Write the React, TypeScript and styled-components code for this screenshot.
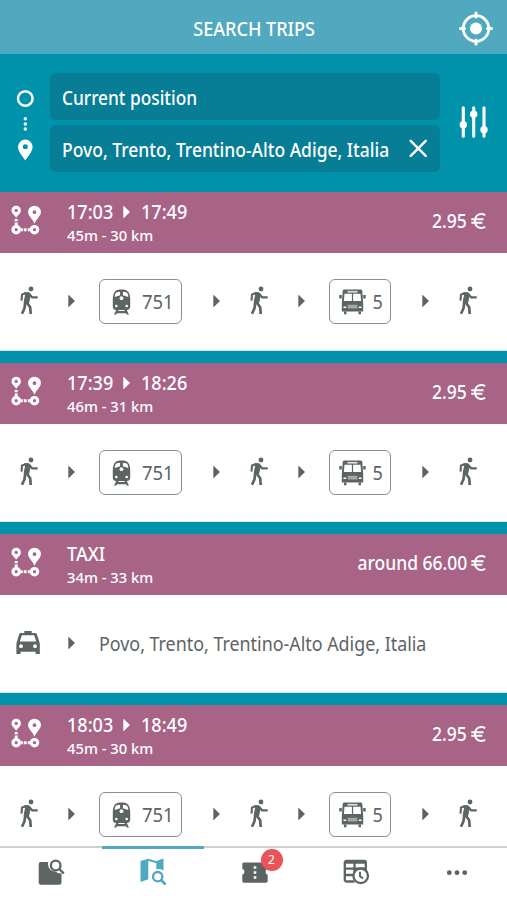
import React from "react";
import styled, { createGlobalStyle } from "styled-components";

const GlobalStyle = createGlobalStyle`
  * { box-sizing: border-box; }
  body { margin: 0; background: #0091ab; font-family: "Noto Sans", sans-serif; }
  svg { display: block; flex: none; }
`;

const Screen = styled.div`
  width: 507px;
  height: 900px;
  overflow: hidden;
  display: flex;
  flex-direction: column;
  background: #0091ab;
`;

const Text = styled.span<{ $size: number; $scale: number; $origin?: string; $weight?: number }>`
  display: block;
  flex: none;
  white-space: nowrap;
  font-size: ${(p) => p.$size}px;
  font-weight: ${(p) => p.$weight ?? 400};
  line-height: 24px;
  transform: scaleX(${(p) => p.$scale});
  transform-origin: ${(p) => p.$origin ?? "left"} center;
`;

const TopBar = styled.header`
  flex: none;
  height: 54px;
  padding: 3px 13px 0 0;
  display: grid;
  grid-template-columns: 50px 1fr 36px;
  align-items: center;
  justify-items: center;
  background: #50a9be;
  color: #fff;
`;

const SearchPanel = styled.section`
  flex: none;
  height: 138px;
  padding: 19px 18px 20px 16px;
  display: flex;
  color: #fff;
`;

const Rail = styled.div`
  width: 34px;
  padding-top: 16px;
`;

const Fields = styled.div`
  width: 390px;
  display: flex;
  flex-direction: column;
  gap: 5px;
`;

const Field = styled.div<{ $height: number }>`
  height: ${(p) => p.$height}px;
  padding: 0 13px 0 12px;
  display: flex;
  align-items: center;
  justify-content: space-between;
  border-radius: 6px;
  background: #087d96;
`;

const FieldLabel = styled.div`
  width: 330px;
  margin-top: 3px;
`;

const FilterButton = styled.div`
  margin: 32px 0 0 18px;
`;

const Trips = styled.main`
  flex: none;
  height: 654px;
  overflow: hidden;
`;

const Card = styled.article`
  margin-bottom: 12px;
`;

const CardHeader = styled.div`
  height: 60.5px;
  padding: 8px 21px 0 11px;
  display: flex;
  background: #a86487;
  color: #fff;
`;

const Summary = styled.div`
  width: 160px;
  margin-left: 26px;
`;

const Times = styled.div`
  height: 23px;
  display: flex;
  align-items: center;
`;

const TimeSlot = styled.div`
  width: 56px;
`;

const TimeArrow = styled.div`
  width: 18px;
`;

const Price = styled.div`
  flex: 1;
  height: 24px;
  margin-top: 9px;
  display: flex;
  align-items: center;
  justify-content: flex-end;
  gap: 4px;
`;

const CardBody = styled.div<{ $taxi?: boolean }>`
  height: 98.5px;
  padding: 0 16px 0 ${(p) => (p.$taxi ? 16 : 19)}px;
  display: flex;
  align-items: center;
  gap: ${(p) => (p.$taxi ? 28 : 29)}px;
  background: #fff;
  border-bottom: 1px solid #d9e6e8;
  color: #5d6464;
`;

const Chip = styled.div<{ $width: number }>`
  flex: none;
  width: ${(p) => p.$width}px;
  height: 45px;
  margin: 1px 1.5px 0 -5px;
  padding: 0 7px 0 9px;
  display: flex;
  align-items: center;
  justify-content: space-between;
  border: 1px solid #8b8f90;
  border-radius: 6px;
`;

const Destination = styled.div`
  margin: 2px 0 0 -4px;
`;

const TabBar = styled.nav`
  flex: none;
  height: 54px;
  display: grid;
  grid-template-columns: 102px 102px 101px 101px 101px;
  background: #fff;
`;

const Tab = styled.div<{ $active?: boolean }>`
  display: flex;
  justify-content: center;
  padding-top: ${(p) => (p.$active ? 9 : 11)}px;
  border-top: ${(p) => (p.$active ? "3px solid #50a9be" : "2px solid #d0d0d0")};
  color: ${(p) => (p.$active ? "#50a9be" : "#5d6464")};
`;

const TicketHolder = styled.div`
  position: relative;
  height: 30px;
`;

const Badge = styled.span`
  position: absolute;
  left: 20px;
  top: -10px;
  width: 22px;
  height: 22px;
  border-radius: 50%;
  background: #eb5358;
  color: #fff;
  font-size: 12px;
  line-height: 22px;
  text-align: center;
`;

const LocateIcon = () => (
  <svg width="36" height="36" viewBox="0 0 36 36" fill="none" stroke="#fff">
    <circle cx="18" cy="17.500" r="12.800" strokeWidth="2.800" />
    <circle cx="18" cy="17.500" r="6" fill="#fff" stroke="none" />
    <path d="M18 2v4M18 29v4M2.500 17.500h4M29.500 17.500h4" strokeWidth="3" strokeLinecap="round" />
  </svg>
);

const RailIcon = () => (
  <svg width="19" height="72" viewBox="0 0 19 72" fill="#fff">
    <circle cx="9.300" cy="9.500" r="7.300" fill="none" stroke="#fff" strokeWidth="2.500" />
    <circle cx="9.300" cy="29.800" r="1.700" />
    <circle cx="9.300" cy="35" r="1.700" />
    <circle cx="9.300" cy="40" r="1.700" />
    <path fillRule="evenodd" d="M9.300 50.500a7.300 7.300 0 0 0-7.300 7.300c0 4.400 3.800 8.700 7.300 13.700 3.500-5 7.300-9.300 7.300-13.700A7.300 7.300 0 0 0 9.300 50.500zm0 4.800a2.500 2.500 0 1 1 0 5 2.500 2.500 0 0 1 0-5z" />
  </svg>
);

const ClearIcon = () => (
  <svg width="18" height="18" viewBox="0 0 18 18" fill="none" stroke="#fff" strokeWidth="2.400" strokeLinecap="round">
    <path d="M1.700 1.800l15 15M16.700 1.800l-15 15" />
  </svg>
);

const FilterIcon = () => (
  <svg width="30" height="34" viewBox="0 0 30 34" fill="#fff" stroke="#fff">
    <path d="M5.300 2.700v28.500M15.700 2.700v28.500M26 2.700v28.500" strokeWidth="3.100" strokeLinecap="round" />
    <g stroke="none">
      <circle cx="5.300" cy="19.700" r="3.700" />
      <circle cx="15.700" cy="9.200" r="3.700" />
      <circle cx="26" cy="24.700" r="3.700" />
    </g>
  </svg>
);

const RouteIcon = () => (
  <svg width="30" height="36" viewBox="0 0 30 36" fill="#fff">
    <path fillRule="evenodd" d="M5.200 5.700a4.700 4.700 0 0 0-4.700 4.700c0 3 2.900 4.200 4.700 7.300 1.800-3.100 4.700-4.300 4.700-7.300a4.700 4.700 0 0 0-4.700-4.700zm0 3a1.700 1.700 0 1 1 0 3.400 1.700 1.700 0 0 1 0-3.400z" />
    <path fillRule="evenodd" d="M23.500 5.700a6.400 6.400 0 0 0-6.400 6.400c0 4.200 4 6.200 6.400 11.600 2.400-5.400 6.400-7.400 6.400-11.600a6.400 6.400 0 0 0-6.400-6.400zm0 4.600a1.900 1.900 0 1 1 0 3.800 1.900 1.900 0 0 1 0-3.800z" />
    <circle cx="5.200" cy="29.700" r="3.200" fill="none" stroke="#fff" strokeWidth="3.200" />
    <circle cx="23.500" cy="29.700" r="3.200" fill="none" stroke="#fff" strokeWidth="3.200" />
    <path d="M3.700 19h3v2.200h-3zM3.700 22.500h3v3h-3zM10 28.200h1.800v3H10zM12.800 28.200h2.800v3h-2.800zM16.800 28.200h2v3h-2z" />
  </svg>
);

const Arrow = () => (
  <svg width="7" height="12" viewBox="0 0 7 12" fill="currentColor">
    <path d="M.3 0h.5L7 6 .8 12H.3z" />
  </svg>
);

const EuroIcon = () => (
  <svg width="15" height="16" viewBox="0 0 15 16" fill="none" stroke="#fff" strokeWidth="1.900">
    <path d="M14.200 2.300C12.500 1 10.500.8 8.700 1.200 5.700 2 4 4.600 4 8s1.700 6 4.700 6.800c1.800.4 3.800.2 5.500-1.100M.3 6.300h12.200M.3 9.700h11" />
  </svg>
);

const WalkIcon = () => (
  <svg width="20" height="32" viewBox="0 0 20 32" fill="none" stroke="#5d6464" strokeLinejoin="round">
    <circle cx="12" cy="4" r="2.400" fill="#5d6464" stroke="none" />
    <path d="M5.500 7.700h4.600l1.100 2.500-1.700 8.300-4.400-.8 1.500-8z" fill="#5d6464" strokeWidth="1" />
    <path d="M7.200 8.200L3 9.500 2.500 15.700" strokeWidth="2.100" />
    <path d="M10 8.800l3 3.500h5.700" strokeWidth="2.300" />
    <path d="M7.700 17.500l3.500 4.800.5 6.700" strokeWidth="2.700" />
    <path d="M6.300 17l-.8 6.200-2.500 5.500" strokeWidth="2.700" />
  </svg>
);

const TrainIcon = () => (
  <svg width="26" height="28" viewBox="0 0 26 28" fill="#5d6464">
    <path d="M12.500 1.500c3 0 5.500.6 6.700 2.300 1.300 1.800 2 4.500 2 7.200v7.800c0 2-1.300 3.200-3.200 3.200H7c-1.900 0-3.200-1.200-3.200-3.200V11c0-2.700.7-5.400 2-7.200 1.200-1.700 3.700-2.300 6.700-2.300z" />
    <g fill="#fff">
      <path d="M6.600 5.300c.4-1 1.500-1.500 4.500-1.600v3.600L5.700 9c0-1.500.3-2.700.9-3.700zM18.400 5.300c-.4-1-1.500-1.500-4.500-1.600v3.600L19.300 9c0-1.500-.3-2.700-.9-3.700z" />
      <circle cx="12.500" cy="10.200" r="1.900" />
      <circle cx="7.300" cy="18" r="1.300" />
      <circle cx="17.700" cy="18" r="1.300" />
    </g>
    <path d="M7.500 21.500h2.200l-.5 1.500h6.600l-.5-1.500h2.200L20 26.500h-2.300l-.6-1.200H7.900l-.6 1.200H5z" />
  </svg>
);

const BusIcon = () => (
  <svg width="28" height="28" viewBox="0 0 28 28" fill="#5d6464">
    <path d="M5.500 1.500h16c1 0 1.700.6 1.800 1.600l.9 12.500v7.900H2.800v-7.900l.9-12.500c.1-1 .8-1.600 1.800-1.600z" />
    <path d="M5.500 5.800h7.400v7.200H4.900zM14.100 5.800h7.400l.6 7.200h-8zM4.500 18.500h2.700v1.600H4.500zM19.800 18.500h2.700v1.600h-2.700z" fill="#fff" />
    <path d="M8.500 2.900h10v1.700h-10z" fill="#dfe1e1" />
    <path d="M8.700 16.800h9.600v3.700H8.700z" fill="#a4a8a8" />
    <path d="M.3 7h2.500v3.500H.3zM24.200 7h2.500v3.500h-2.500zM5 23.500h2.500v2.800H5zM19.500 23.500H22v2.800h-2.500z" />
  </svg>
);

const TaxiIcon = () => (
  <svg width="24" height="26" viewBox="0 0 24 26" fill="#5d6464">
    <path d="M8.300 1h7.400v2h3c1.300 0 2 .6 2.300 1.500l2.800 9V24h-4.200v-2.200H4.600V24H.4V13.500L3 4.500C3.300 3.600 4 3 5.300 3h3z" />
    <path d="M5.800 5.300h12.400l2 6.200H3.800z" fill="#fff" />
    <circle cx="5" cy="16.200" r="1.900" fill="#fff" />
    <circle cx="19" cy="16.200" r="1.900" fill="#fff" />
  </svg>
);

const PlaceSearchIcon = () => (
  <svg width="28" height="28" viewBox="0 0 28 28" fill="currentColor">
    <path d="M4 3h7.200c-1 5.500 2.500 9.700 7.500 9.500l2.300 1.700h3.500v9c0 1.700-.8 2.500-2.500 2.500h-18c-1.500 0-2.300-.8-2.300-2.500V5.500C1.700 3.800 2.500 3 4 3z" />
    <g fill="none" stroke="currentColor" strokeWidth="2.300">
      <circle cx="18.700" cy="6.500" r="4.800" />
      <path d="M22.200 10l4 3.800" strokeLinecap="round" />
    </g>
  </svg>
);

const MapSearchIcon = () => (
  <svg width="28" height="28" viewBox="0 0 28 28" fill="currentColor">
    <path d="M1.500 3l7.800-2.200v20.400l-7.800 2.800zM17.300 3.500L24.500.8v11.900c-2-1.500-4.800-2-7.200-1.200z" />
    <g fill="none" stroke="currentColor" strokeWidth="2">
      <path d="M9 1.800l8.500 2.500L24 1.800" />
      <circle cx="18.700" cy="18.700" r="4.700" strokeWidth="2.300" />
      <path d="M22.300 22.300l3.500 3.500" strokeLinecap="round" strokeWidth="2.700" />
    </g>
  </svg>
);

const TicketIcon = () => (
  <svg width="28" height="26" viewBox="0 0 28 26" fill="currentColor">
    <path d="M3 3.500h22c1 0 1.700.8 1.700 1.800v4.500c-2.700.5-2.700 5.500 0 6V22c0 1-.7 1.700-1.700 1.700H3c-1 0-1.700-.7-1.700-1.700v-6.200c2.700-.5 2.700-5.500 0-6V5.300c0-1 .7-1.800 1.700-1.800z" />
    <path d="M12.700 7.300h2.600v2.500h-2.600zM12.700 12.300h2.600v2.500h-2.600zM12.700 17.300h2.600v2.500h-2.600z" fill="#fff" />
  </svg>
);

const TimetableIcon = () => (
  <svg width="28" height="28" viewBox="0 0 28 28" fill="none" stroke="currentColor" strokeWidth="2.300">
    <path d="M12.500 22.500H4.300c-.8 0-1.500-.7-1.500-1.500V3.500c0-.8.700-1.500 1.500-1.500h18c.8 0 1.500.7 1.500 1.500v8M3 3.500h20.500M3 9.700h20.500M3 16h9M12.500 3v13" />
    <circle cx="18.700" cy="16.800" r="7.300" fill="#fff" strokeWidth="2.300" />
    <path d="M18 12.700v4.500l3 2.200" strokeWidth="2" />
  </svg>
);

const MoreIcon = () => (
  <svg width="28" height="28" viewBox="0 0 28 28" fill="currentColor">
    <circle cx="6.300" cy="13.700" r="2.400" />
    <circle cx="14" cy="13.700" r="2.400" />
    <circle cx="21.700" cy="13.700" r="2.400" />
  </svg>
);

const Amount = ({ children }: { children: string }) => (
  <Price>
    <Text $size={19} $scale={0.92} $origin="right" $weight={500}>{children}</Text>
    <EuroIcon />
  </Price>
);

const TransitTrip = ({ from, to, info }: { from: string; to: string; info: string }) => (
  <Card>
    <CardHeader>
      <RouteIcon />
      <Summary>
        <Times>
          <TimeSlot><Text $size={19} $scale={0.95} $weight={500}>{from}</Text></TimeSlot>
          <TimeArrow><Arrow /></TimeArrow>
          <Text $size={19} $scale={0.95} $weight={500}>{to}</Text>
        </Times>
        <Text $size={15} $scale={0.985} $weight={500}>{info}</Text>
      </Summary>
      <Amount>2.95</Amount>
    </CardHeader>
    <CardBody>
      <WalkIcon />
      <Arrow />
      <Chip $width={83}>
        <TrainIcon />
        <Text $size={19} $scale={0.97} $origin="right">751</Text>
      </Chip>
      <Arrow />
      <WalkIcon />
      <Arrow />
      <Chip $width={62.5}>
        <BusIcon />
        <Text $size={19} $scale={0.95} $origin="right">5</Text>
      </Chip>
      <Arrow />
      <WalkIcon />
    </CardBody>
  </Card>
);

const TaxiTrip = () => (
  <Card>
    <CardHeader>
      <RouteIcon />
      <Summary>
        <Times><Text $size={19} $scale={0.95} $weight={500}>TAXI</Text></Times>
        <Text $size={15} $scale={0.985} $weight={500}>34m - 33 km</Text>
      </Summary>
      <Amount>around 66.00</Amount>
    </CardHeader>
    <CardBody $taxi>
      <TaxiIcon />
      <Arrow />
      <Destination><Text $size={19} $scale={0.94}>Povo, Trento, Trentino-Alto Adige, Italia</Text></Destination>
    </CardBody>
  </Card>
);

export default function App() {
  return (
    <Screen>
      <GlobalStyle />
      <TopBar>
        <span />
        <Text $size={19} $scale={0.95} $origin="center" $weight={500}>SEARCH TRIPS</Text>
        <LocateIcon />
      </TopBar>
      <SearchPanel>
        <Rail><RailIcon /></Rail>
        <Fields>
          <Field $height={46.5}>
            <FieldLabel><Text $size={19} $scale={0.91} $weight={500}>Current position</Text></FieldLabel>
          </Field>
          <Field $height={47.5}>
            <FieldLabel><Text $size={19} $scale={0.92} $weight={500}>Povo, Trento, Trentino-Alto Adige, Italia</Text></FieldLabel>
            <ClearIcon />
          </Field>
        </Fields>
        <FilterButton><FilterIcon /></FilterButton>
      </SearchPanel>
      <Trips>
        <TransitTrip from="17:03" to="17:49" info="45m - 30 km" />
        <TransitTrip from="17:39" to="18:26" info="46m - 31 km" />
        <TaxiTrip />
        <TransitTrip from="18:03" to="18:49" info="45m - 30 km" />
      </Trips>
      <TabBar>
        <Tab><PlaceSearchIcon /></Tab>
        <Tab $active><MapSearchIcon /></Tab>
        <Tab>
          <TicketHolder>
            <TicketIcon />
            <Badge>2</Badge>
          </TicketHolder>
        </Tab>
        <Tab><TimetableIcon /></Tab>
        <Tab><MoreIcon /></Tab>
      </TabBar>
    </Screen>
  );
}
